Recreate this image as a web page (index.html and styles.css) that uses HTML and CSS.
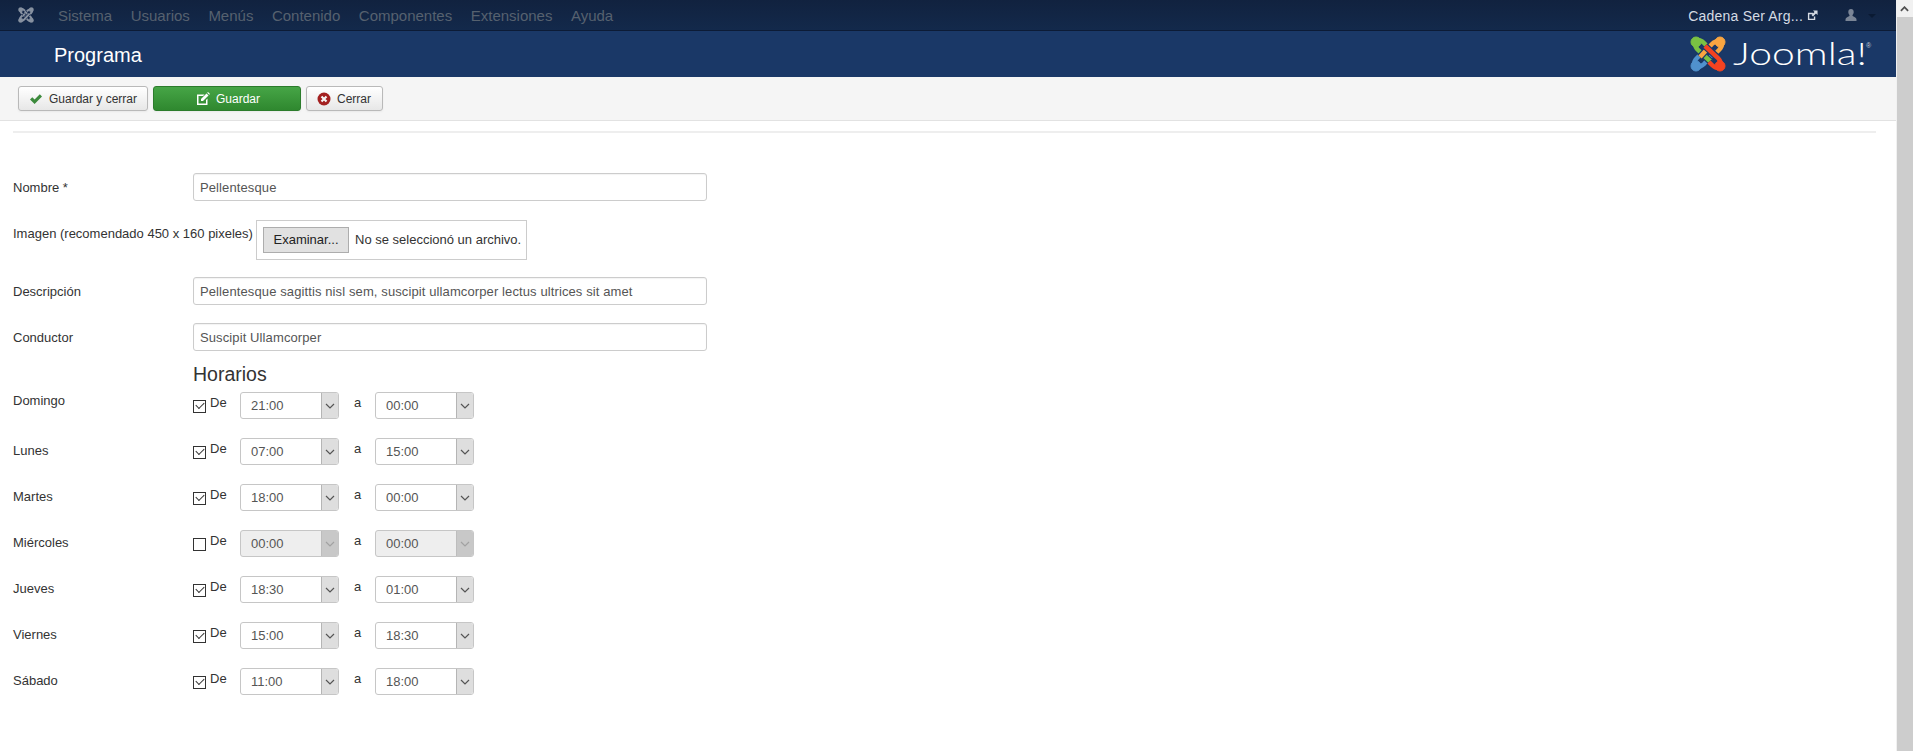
FILE: index.html
```html
<!DOCTYPE html>
<html lang="es">
<head>
<meta charset="utf-8">
<title>Programa</title>
<link rel="stylesheet" href="styles.css">
</head>
<body>
<svg class="defs" width="0" height="0" aria-hidden="true">
  <defs>
    <g id="jpiece">
      <path class="halo" d="M5 7C5 10 6 12 8 14L21 26"/>
      <path class="halo" d="M8 4C11 4 12 5 14 7L17 10"/>
      <circle cx="6" cy="6" r="5"/>
      <path class="arm" d="M5 7C5 10 6 12 8 14L21 26"/>
      <path class="arm" d="M8 4C11 4 12 5 14 7L17 10"/>
    </g>
  </defs>
</svg>
<div class="page">
  <div class="main">
    <nav class="topbar">
      <svg class="brand-mark" viewBox="0 0 36 36">
        <use href="#jpiece"/>
        <use href="#jpiece" transform="rotate(90 18 18)"/>
        <use href="#jpiece" transform="rotate(180 18 18)"/>
        <use href="#jpiece" transform="rotate(270 18 18)"/>
      </svg>
      <ul class="menu">
        <li>Sistema</li><li>Usuarios</li><li>Menús</li><li>Contenido</li><li>Componentes</li><li>Extensiones</li><li>Ayuda</li>
      </ul>
      <div class="topbar-right">
        <span class="site-name">Cadena Ser Arg...</span>
        <svg class="ext-icon" viewBox="0 0 12 12"><path d="M1 3h5.500v1.500H2.500v5h5V7H9v4H1z"/><path d="M6.500 0.500H11.500V5.500L9.800 3.800 6.500 7.100 4.900 5.500 8.200 2.200z"/></svg>
        <svg class="user-icon" viewBox="0 0 12 12"><path d="M6 0C4.200 0 3.300 1.300 3.300 3c0 1.300.6 2.400 1.200 3 .1.500 0 1-.5 1.300C2.800 8 .5 8.600.5 10.500V12h11v-1.500c0-1.900-2.300-2.500-3.500-3.200-.5-.3-.6-.8-.5-1.300.6-.6 1.200-1.700 1.200-3C8.700 1.300 7.800 0 6 0z"/></svg>
        <span class="caret"></span>
      </div>
    </nav>
    <header class="titlebar">
      <h1 class="page-title">Programa</h1>
      <svg class="logo" viewBox="0 -4 190 44">
        <g class="logo-mark">
          <g class="p-blue"><use href="#jpiece" transform="rotate(270 18 18)"/></g>
          <g class="p-green"><use href="#jpiece"/></g>
          <g class="p-orange"><use href="#jpiece" transform="rotate(90 18 18)"/></g>
          <g class="p-red"><use href="#jpiece" transform="rotate(180 18 18)"/></g>
        </g>
        <text class="logo-word" x="43" y="29" textLength="134" lengthAdjust="spacingAndGlyphs">Joomla!</text>
        <text class="logo-reg" x="176" y="12">®</text>
      </svg>
    </header>
    <div class="toolbar">
      <button class="btn btn-first" type="button">
        <svg class="ico ico-check" viewBox="0 0 14 14"><path d="M1 7.500 3.300 5.200 5.600 7.500 10.800 2.300 13 4.500 5.600 12z"/></svg>
        <span>Guardar y cerrar</span>
      </button>
      <button class="btn btn-primary" type="button">
        <svg class="ico ico-edit" viewBox="0 0 14 14"><path d="M1 2.500h7.500L7 4H2.500v7.500H10V8l1.500-1.500V13H1z"/><path d="M5 7 10.500 1.500 12.500 3.500 7 9H5z"/><path d="M11.200 .8 12 0 14 2 13.200 2.800z"/></svg>
        <span>Guardar</span>
      </button>
      <button class="btn btn-close" type="button">
        <svg class="ico ico-close" viewBox="0 0 14 14"><circle cx="7" cy="7" r="6.500"/><path class="x" d="M4.500 4.500l5 5M9.500 4.500l-5 5"/></svg>
        <span>Cerrar</span>
      </button>
    </div>
    <main class="content">
      <hr class="rule">
      <form class="form">
        <div class="row row-name">
          <label class="lbl">Nombre *</label>
          <input class="field" type="text" value="Pellentesque">
        </div>
        <div class="row row-image">
          <label class="lbl lbl-image">Imagen (recomendado 450 x 160 pixeles)</label>
          <div class="filebox">
            <span class="filebtn">Examinar...</span>
            <span class="filetext">No se seleccionó un archivo.</span>
          </div>
        </div>
        <div class="row row-desc">
          <label class="lbl">Descripción</label>
          <input class="field" type="text" value="Pellentesque sagittis nisl sem, suscipit ullamcorper lectus ultrices sit amet">
        </div>
        <div class="row row-host">
          <label class="lbl">Conductor</label>
          <input class="field" type="text" value="Suscipit Ullamcorper">
        </div>
        <h3 class="section">Horarios</h3>
        <div class="day day-first">
          <span class="lbl">Domingo</span>
          <input class="chk" type="checkbox" checked><span class="de">De</span>
          <span class="sel"><select><option>21:00</option></select><span class="arrow"><svg viewBox="0 0 10 6"><path d="M1 1l4 4 4-4"/></svg></span></span>
          <span class="a">a</span>
          <span class="sel"><select><option>00:00</option></select><span class="arrow"><svg viewBox="0 0 10 6"><path d="M1 1l4 4 4-4"/></svg></span></span>
        </div>
        <div class="day">
          <span class="lbl">Lunes</span>
          <input class="chk" type="checkbox" checked><span class="de">De</span>
          <span class="sel"><select><option>07:00</option></select><span class="arrow"><svg viewBox="0 0 10 6"><path d="M1 1l4 4 4-4"/></svg></span></span>
          <span class="a">a</span>
          <span class="sel"><select><option>15:00</option></select><span class="arrow"><svg viewBox="0 0 10 6"><path d="M1 1l4 4 4-4"/></svg></span></span>
        </div>
        <div class="day">
          <span class="lbl">Martes</span>
          <input class="chk" type="checkbox" checked><span class="de">De</span>
          <span class="sel"><select><option>18:00</option></select><span class="arrow"><svg viewBox="0 0 10 6"><path d="M1 1l4 4 4-4"/></svg></span></span>
          <span class="a">a</span>
          <span class="sel"><select><option>00:00</option></select><span class="arrow"><svg viewBox="0 0 10 6"><path d="M1 1l4 4 4-4"/></svg></span></span>
        </div>
        <div class="day">
          <span class="lbl">Miércoles</span>
          <input class="chk" type="checkbox"><span class="de">De</span>
          <span class="sel sel-off"><select disabled><option>00:00</option></select><span class="arrow"><svg viewBox="0 0 10 6"><path d="M1 1l4 4 4-4"/></svg></span></span>
          <span class="a">a</span>
          <span class="sel sel-off"><select disabled><option>00:00</option></select><span class="arrow"><svg viewBox="0 0 10 6"><path d="M1 1l4 4 4-4"/></svg></span></span>
        </div>
        <div class="day">
          <span class="lbl">Jueves</span>
          <input class="chk" type="checkbox" checked><span class="de">De</span>
          <span class="sel"><select><option>18:30</option></select><span class="arrow"><svg viewBox="0 0 10 6"><path d="M1 1l4 4 4-4"/></svg></span></span>
          <span class="a">a</span>
          <span class="sel"><select><option>01:00</option></select><span class="arrow"><svg viewBox="0 0 10 6"><path d="M1 1l4 4 4-4"/></svg></span></span>
        </div>
        <div class="day">
          <span class="lbl">Viernes</span>
          <input class="chk" type="checkbox" checked><span class="de">De</span>
          <span class="sel"><select><option>15:00</option></select><span class="arrow"><svg viewBox="0 0 10 6"><path d="M1 1l4 4 4-4"/></svg></span></span>
          <span class="a">a</span>
          <span class="sel"><select><option>18:30</option></select><span class="arrow"><svg viewBox="0 0 10 6"><path d="M1 1l4 4 4-4"/></svg></span></span>
        </div>
        <div class="day">
          <span class="lbl">Sábado</span>
          <input class="chk" type="checkbox" checked><span class="de">De</span>
          <span class="sel"><select><option>11:00</option></select><span class="arrow"><svg viewBox="0 0 10 6"><path d="M1 1l4 4 4-4"/></svg></span></span>
          <span class="a">a</span>
          <span class="sel"><select><option>18:00</option></select><span class="arrow"><svg viewBox="0 0 10 6"><path d="M1 1l4 4 4-4"/></svg></span></span>
        </div>
      </form>
    </main>
  </div>
  <div class="scrollbar">
    <div class="scroll-up"><svg viewBox="0 0 10 6"><path d="M1 5l4-4 4 4"/></svg></div>
    <div class="scroll-thumb"></div>
  </div>
</div>
</body>
</html>
```

FILE: styles.css
```css
* { box-sizing: border-box; }
html, body { margin: 0; height: 100%; overflow: hidden; }
body { font-family: "Liberation Sans", Arial, sans-serif; font-size: 13px; line-height: 18px; color: #333; background: #fff; }
.defs { position: absolute; }
.page { display: flex; height: 751px; }
.main { flex: 1; min-width: 0; display: flex; flex-direction: column; }

/* top navigation */
.topbar { --halo: #12264a; height: 31px; flex: none; display: flex; align-items: center; padding: 1px 20px 0 18px; background: linear-gradient(#11223f, #13294b); border-bottom: 1px solid #0c1b36; }
.brand-mark { width: 16px; height: 16px; flex: none; margin-top: -1px; color: #8791a0; fill: #8791a0; stroke: #8791a0; }
.arm { fill: none; stroke-width: 4.500; }
.halo { fill: none; stroke: var(--halo); stroke-width: 7; }
.menu { display: flex; list-style: none; margin: 0 0 0 24px; padding: 0; font-size: 15px; color: #56616f; gap: 18.500px; }
.topbar-right { margin-left: auto; display: flex; align-items: center; color: #d5dbe3; font-size: 14px; }
.site-name { letter-spacing: .2px; }
.ext-icon { width: 11px; height: 11px; margin-left: 4px; fill: #d5dbe3; }
.user-icon { width: 12px; height: 12px; margin-left: 27px; margin-top: -2px; fill: #7a8596; }
.caret { width: 0; height: 0; margin-left: 11px; margin-top: 1px; border: 4px solid transparent; border-top-color: #0a1a33; border-bottom: 0; }

/* title */
.titlebar { --halo: #1a3867; height: 46px; flex: none; display: flex; align-items: center; justify-content: space-between; padding: 0 16px 0 54px; background: #1a3867; }
.page-title { margin: 2px 0 0; font-size: 20px; font-weight: 400; line-height: 24px; color: #fff; }
.logo { width: 190px; height: 44px; }
.p-green { fill: #7ac143; stroke: #7ac143; }
.p-orange { fill: #f9a541; stroke: #f9a541; }
.p-red { fill: #f44321; stroke: #f44321; }
.p-blue { fill: #5091cd; stroke: #5091cd; }
.logo-word { font-family: Lato, "Open Sans", sans-serif; font-weight: 300; font-size: 31px; fill: #fff; }
.logo-reg { font-size: 7px; fill: #c5ccd6; font-family: "Liberation Sans", sans-serif; }

/* toolbar */
.toolbar { height: 44px; flex: none; display: flex; align-items: flex-start; gap: 5px; padding: 9px 0 0 18px; background: #f5f5f5; border-bottom: 1px solid #e2e2e2; }
.btn { display: flex; align-items: center; height: 25px; padding: 0; font: 12px/16px "Liberation Sans", Arial, sans-serif; color: #333; border: 1px solid #b9b9b9; border-radius: 3px; background: linear-gradient(#fff, #e7e7e7); box-shadow: 0 1px 2px rgba(0,0,0,.05); }
.ico { width: 14px; height: 14px; flex: none; }
.btn-first { width: 130px; padding-left: 10px; gap: 6px; }
.ico-check { fill: #3c8a3c; }
.btn-primary { width: 148px; padding-left: 42px; gap: 6px; color: #fff; background: linear-gradient(#46a546, #2f882f); border-color: #2c7c2c; }
.ico-edit { fill: #fff; }
.btn-close { width: 77px; padding-left: 10px; gap: 6px; }
.ico-close { fill: #a32020; }
.x { fill: none; stroke: #f5f5f5; stroke-width: 2.200; }

/* content */
.content { flex: 1; padding: 10px 20px 0 13px; }
.rule { margin: 0; height: 0; border: 0; border-top: 2px solid #eee; }
.form { display: block; padding-top: 40px; }
.row { display: grid; grid-template-columns: 180px 514px; align-items: center; }
.row .lbl { margin-top: 2px; }
.lbl { color: #333; }
.field { width: 514px; height: 28px; padding: 0 6px; font: 13px "Liberation Sans", Arial, sans-serif; letter-spacing: .11px; color: #555; background: #fff; border: 1px solid #ccc; border-radius: 3px; box-shadow: inset 0 1px 1px rgba(0,0,0,.05); }
.row-image { margin-top: 18px; grid-template-columns: 243px auto; justify-content: start; align-items: start; }
.row .lbl-image { margin-top: 6px; white-space: nowrap; }
.filebox { display: flex; align-items: center; width: 271px; height: 40px; margin-top: 1px; padding-left: 6px; border: 1px solid #ccc; background: #fff; }
.filebtn { width: 86px; height: 26px; line-height: 24px; text-align: center; color: #222; background: #e1e1e1; border: 1px solid #adadad; }
.filetext { margin-left: 6px; color: #333; white-space: nowrap; }
.row-desc { margin-top: 17px; }
.row-host { margin-top: 18px; }
.section { margin: 11px 0 0 180px; font-size: 19.500px; font-weight: 400; line-height: 24px; color: #333; }
.day { display: flex; align-items: flex-start; height: 46px; }
.day-first { margin-top: 6px; }
.day .lbl { width: 180px; margin-top: 4px; }
.day-first .lbl { margin-top: 0; }
.chk { appearance: none; position: relative; width: 13px; height: 13px; margin: 8px 4px 0 0; flex: none; background: #fff; border: 1px solid #333; }
.chk:checked::after { content: ""; position: absolute; left: 2px; top: 1px; width: 7px; height: 4px; border-left: 1px solid #333; border-bottom: 1px solid #333; transform: rotate(-45deg); }
.de { width: 30px; line-height: 16px; margin-top: 3px; }
.sel { position: relative; display: block; width: 99px; height: 27px; flex: none; }
.sel select { appearance: none; display: block; width: 99px; height: 27px; padding: 0 0 0 10px; font: 13px "Liberation Sans", Arial, sans-serif; color: #555; background: #fff; border: 1px solid #c6c6c6; border-radius: 3px; opacity: 1; }
.arrow { position: absolute; top: 1px; right: 1px; bottom: 1px; width: 17px; display: flex; align-items: center; justify-content: center; background: #dedede; border-left: 1px solid #b5b5b5; border-radius: 0 2px 2px 0; pointer-events: none; }
.arrow svg { width: 10px; height: 6px; fill: none; stroke: #555; stroke-width: 1.200; }
.a { width: 36px; padding-left: 15px; line-height: 16px; margin-top: 3px; }
.sel-off select { background: #eee; color: #555; }
.sel-off .arrow { background: #c8c8c8; border-left-color: #bdbdbd; }
.sel-off .arrow svg { stroke: #a2a2a2; }

/* scrollbar */
.scrollbar { width: 17px; flex: none; display: flex; flex-direction: column; background: #f1f1f1; }
.scroll-up { height: 17px; flex: none; display: flex; align-items: center; justify-content: center; }
.scroll-up svg { width: 9px; height: 6px; fill: none; stroke: #505050; stroke-width: 2; }
.scroll-thumb { flex: 1; margin-left: 1px; background: #cdcdcd; }
```
